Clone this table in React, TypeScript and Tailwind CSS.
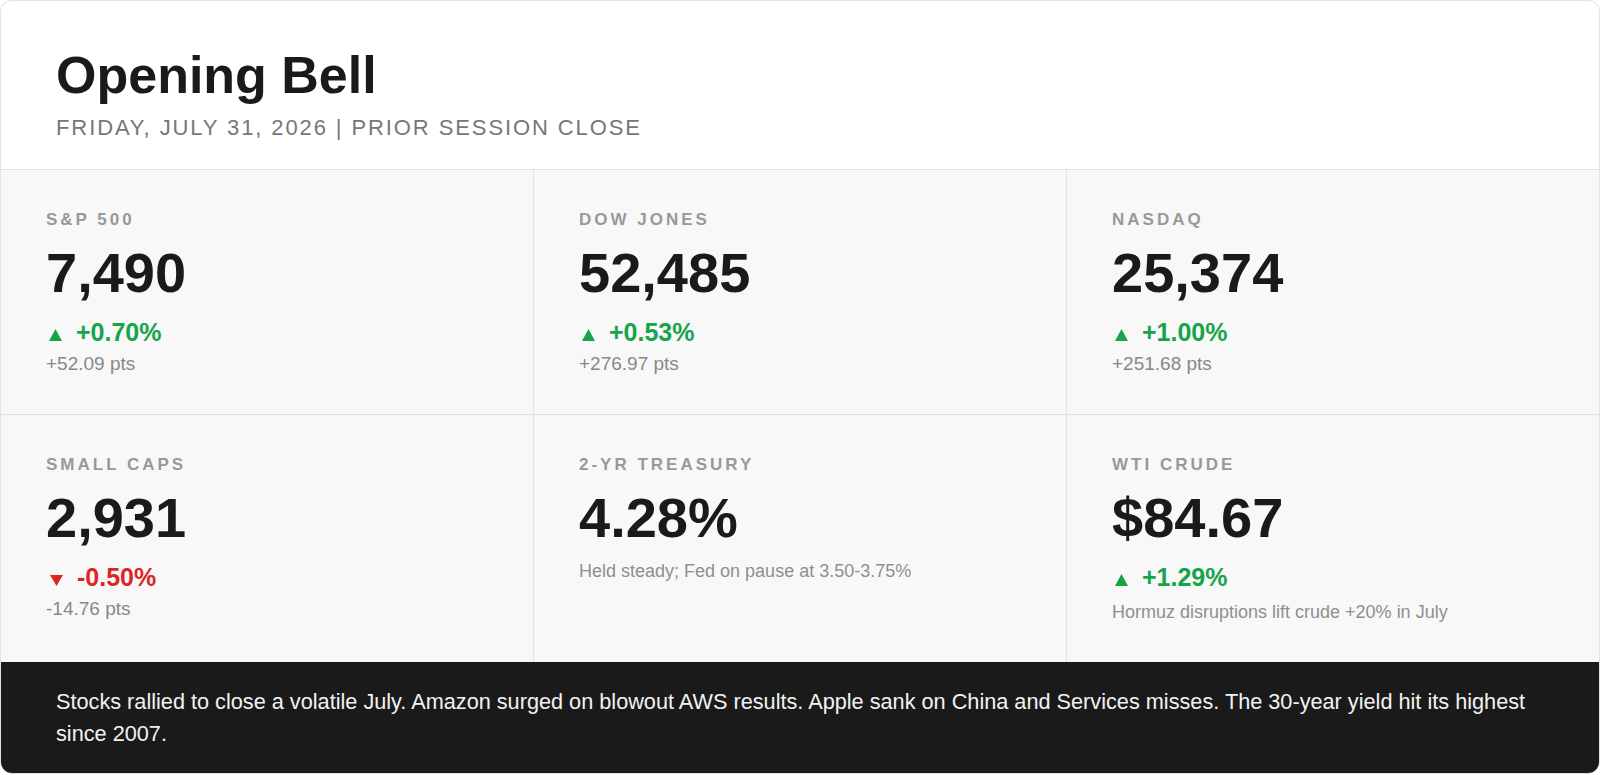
import React from 'react';

type Direction = 'up' | 'down';

interface Metric {
  label: string;
  value: string;
  change?: { direction: Direction; pct: string };
  pts?: string;
  note?: string;
}

const metrics: Metric[] = [
  { label: 'S&P 500', value: '7,490', change: { direction: 'up', pct: '+0.70%' }, pts: '+52.09 pts' },
  { label: 'Dow Jones', value: '52,485', change: { direction: 'up', pct: '+0.53%' }, pts: '+276.97 pts' },
  { label: 'Nasdaq', value: '25,374', change: { direction: 'up', pct: '+1.00%' }, pts: '+251.68 pts' },
  { label: 'Small Caps', value: '2,931', change: { direction: 'down', pct: '-0.50%' }, pts: '-14.76 pts' },
  { label: '2-YR Treasury', value: '4.28%', note: 'Held steady; Fed on pause at 3.50-3.75%' },
  {
    label: 'WTI Crude',
    value: '$84.67',
    change: { direction: 'up', pct: '+1.29%' },
    note: 'Hormuz disruptions lift crude +20% in July',
  },
];

function Arrow({ direction }: { direction: Direction }) {
  if (direction === 'up') {
    return (
      <svg className="ml-[3px] h-[12px] w-[13px] shrink-0" viewBox="0 0 13 12">
        <polygon points="6.5,0 13,12 0,12" fill="#16a34a" />
      </svg>
    );
  }
  return (
    <svg className="ml-[4px] h-[11px] w-[13px] shrink-0" viewBox="0 0 13 11">
      <polygon points="0,0 13,0 6.5,11" fill="#dc2626" />
    </svg>
  );
}

function MetricCell({ metric }: { metric: Metric }) {
  const { label, value, change, pts, note } = metric;
  const up = change?.direction === 'up';

  return (
    <div className="bg-[#f8f8f8] pl-[45px] pr-6 pt-[41px] pb-[41px]">
      <div className="text-[17px] leading-none font-bold uppercase tracking-[3px] text-[#999999]">{label}</div>
      <div className="mt-[17px] text-[56px] leading-none font-bold text-[#1a1a1a]">{value}</div>

      {change && (
        <div className="mt-[19px] flex items-baseline">
          <Arrow direction={change.direction} />
          <span
            className={`ml-[14px] text-[25px] leading-none font-bold ${up ? 'text-[#16a34a]' : 'text-[#dc2626]'}`}
          >
            {change.pct}
          </span>
        </div>
      )}

      {pts && <div className="mt-[9px] text-[19px] leading-none text-[#888888]">{pts}</div>}

      {note && (
        <div className={`${change ? 'mt-[13px]' : 'mt-[16px]'} text-[18px] leading-none text-[#8f8f8f]`}>
          {note}
        </div>
      )}
    </div>
  );
}

export default function App() {
  return (
    <div className="min-h-[775px] bg-white font-['Liberation_Sans',Arial,sans-serif]">
      <div className="w-[1600px] overflow-hidden rounded-[12px] border border-[#e2e2e2] bg-white">
        {/* Header */}
        <div className="border-b border-[#e2e2e2] px-[55px] pt-[48px] pb-[30px]">
          <h1 className="text-[52px] leading-none font-bold text-[#1a1a1a]">Opening Bell</h1>
          <p className="mt-[16px] text-[22px] leading-none uppercase tracking-[1.9px] text-[#777777]">
            Friday, July 31, 2026 | Prior Session Close
          </p>
        </div>

        {/* Market grid */}
        <div className="grid grid-cols-3 gap-px bg-[#e2e2e2]">
          {metrics.map((m) => (
            <MetricCell key={m.label} metric={m} />
          ))}
        </div>

        {/* Summary */}
        <div className="bg-[#1a1a1a] pl-[55px] pr-[40px] py-6">
          <p className="text-[21.7px] leading-[31.5px] text-[#f2f2f2]">
            Stocks rallied to close a volatile July. Amazon surged on blowout AWS results. Apple sank on China and
            Services misses. The 30-year yield hit its highest since 2007.
          </p>
        </div>
      </div>
    </div>
  );
}
